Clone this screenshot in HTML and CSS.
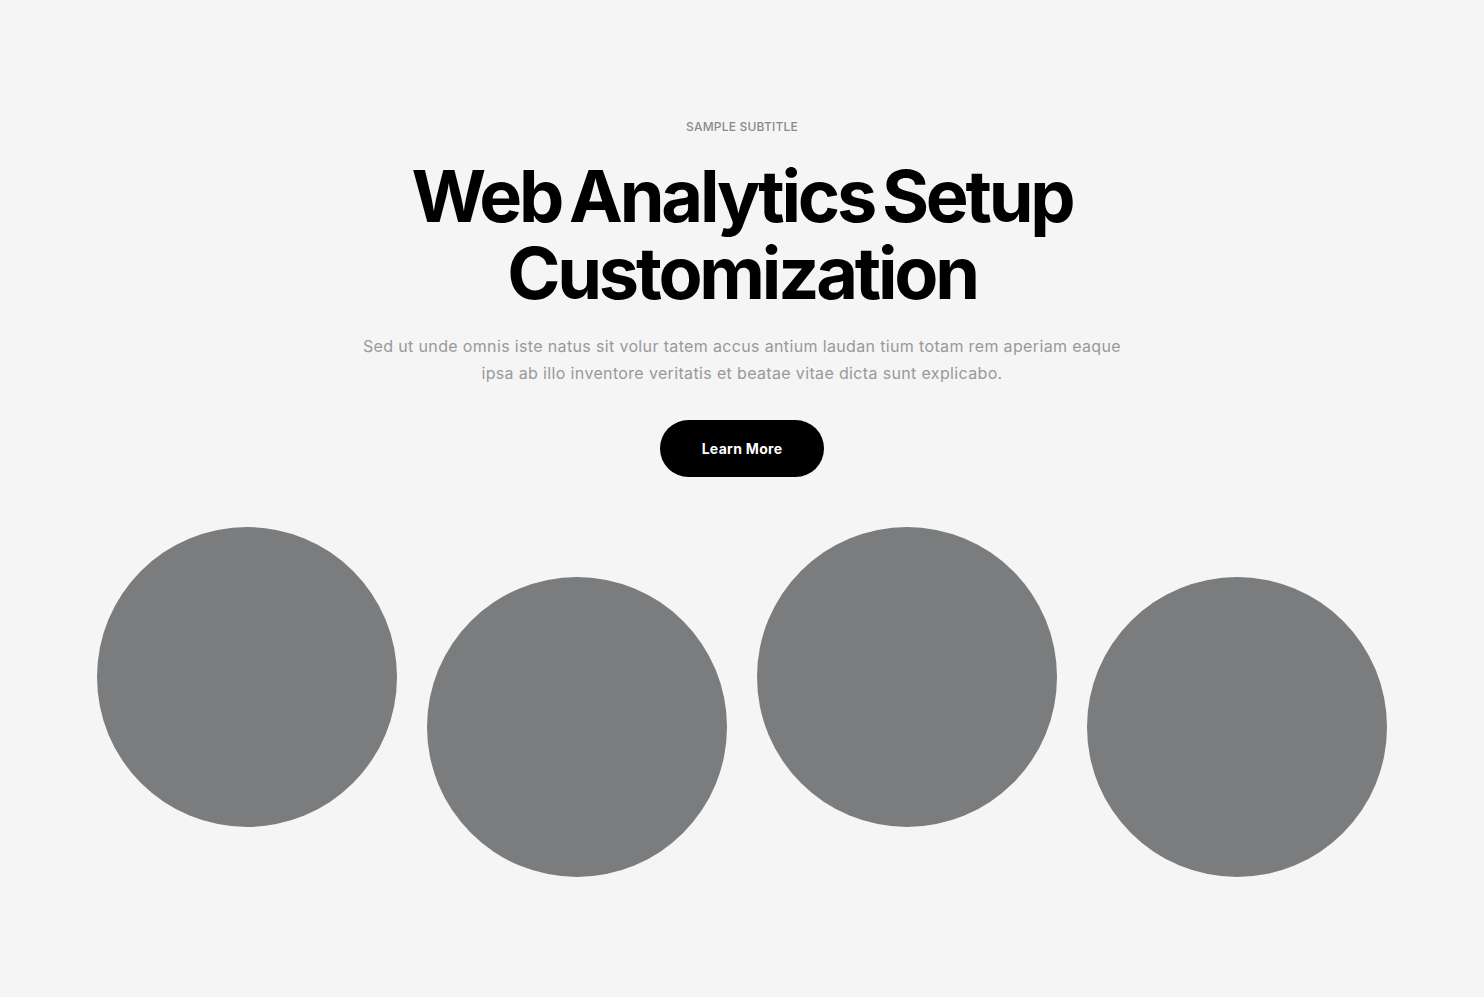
FILE: index.html
```html
<!DOCTYPE html>
<html lang="en">
<head>
<meta charset="utf-8">
<title>Web Analytics Setup Customization</title>
<link rel="stylesheet" href="styles.css">
</head>
<body>
<section class="hero">
  <p class="subtitle">SAMPLE SUBTITLE</p>
  <h1 class="title">Web Analytics Setup<br>Customization</h1>
  <p class="lead">Sed ut unde omnis iste natus sit volur tatem accus antium laudan tium totam rem aperiam eaque<br>ipsa ab illo inventore veritatis et beatae vitae dicta sunt explicabo.</p>
  <a class="btn" href="#">Learn More</a>
  <div class="circles">
    <div class="circle"></div>
    <div class="circle circle-low"></div>
    <div class="circle"></div>
    <div class="circle circle-low"></div>
  </div>
</section>
</body>
</html>
```

FILE: styles.css
```css
html, body {
  margin: 0;
  padding: 0;
  background: #f5f5f5;
}
body {
  font-family: Inter, "Noto Sans", sans-serif;
  height: 997px;
}
.hero {
  display: flex;
  flex-direction: column;
  align-items: center;
  padding-top: 119px;
}
.subtitle {
  margin: 0;
  font-size: 12px;
  line-height: 16px;
  color: #8a8a8a;
  letter-spacing: 0.2px;
  font-weight: 500;
}
.title {
  margin: 22px 0 0;
  font-size: 72px;
  line-height: 77px;
  font-weight: 700;
  letter-spacing: -3.2px;
  word-spacing: -6px;
  text-align: center;
  color: #000;
}
.lead {
  margin: 22px 0 0;
  font-size: 16px;
  line-height: 27px;
  color: #999999;
  text-align: center;
  letter-spacing: 0.35px;
}
.btn {
  margin-top: 33px;
  display: flex;
  align-items: center;
  justify-content: center;
  width: 164px;
  height: 57px;
  border-radius: 29px;
  background: #000;
  color: #fff;
  font-size: 14px;
  font-weight: 700;
  letter-spacing: 0.3px;
  text-decoration: none;
}
.circles {
  margin-top: 50px;
  display: flex;
  gap: 30px;
  align-items: flex-start;
}
.circle {
  width: 300px;
  height: 300px;
  border-radius: 50%;
  background: #7b7c7d;
}
.circle-low {
  margin-top: 50px;
}
```
